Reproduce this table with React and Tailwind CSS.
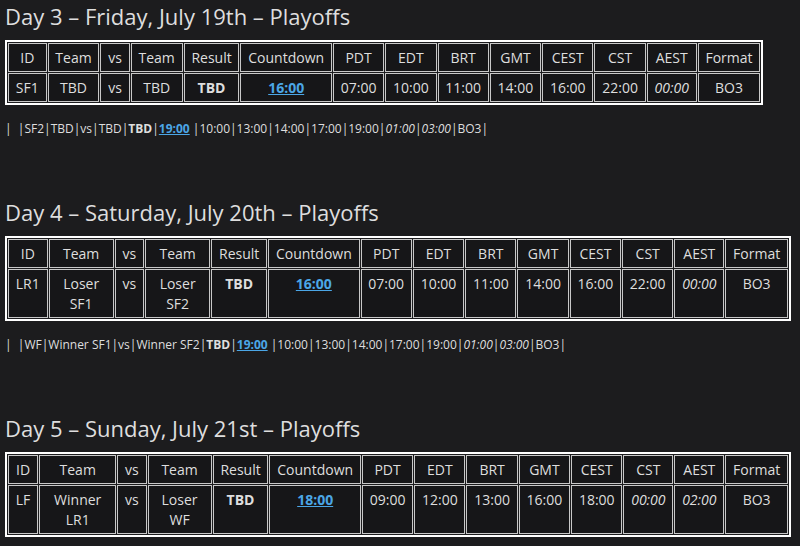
import React from "react";

const zones = ["PDT", "EDT", "BRT", "GMT", "CEST", "CST", "AEST"];

const days = [
  {
    title: "Day 3 – Friday, July 19th – Playoffs",
    match: {
      id: "SF1",
      team1: "TBD",
      team2: "TBD",
      countdown: "16:00",
      times: ["07:00", "10:00", "11:00", "14:00", "16:00", "22:00", "00:00"],
      italic: [6],
    },
    next: {
      id: "SF2",
      team1: "TBD",
      team2: "TBD",
      countdown: "19:00",
      times: ["10:00", "13:00", "14:00", "17:00", "19:00", "01:00", "03:00"],
      italic: [5, 6],
    },
  },
  {
    title: "Day 4 – Saturday, July 20th – Playoffs",
    match: {
      id: "LR1",
      team1: "Loser SF1",
      team2: "Loser SF2",
      countdown: "16:00",
      times: ["07:00", "10:00", "11:00", "14:00", "16:00", "22:00", "00:00"],
      italic: [6],
    },
    next: {
      id: "WF",
      team1: "Winner SF1",
      team2: "Winner SF2",
      countdown: "19:00",
      times: ["10:00", "13:00", "14:00", "17:00", "19:00", "01:00", "03:00"],
      italic: [5, 6],
    },
  },
  {
    title: "Day 5 – Sunday, July 21st – Playoffs",
    match: {
      id: "LF",
      team1: "Winner LR1",
      team2: "Loser WF",
      countdown: "18:00",
      times: ["09:00", "12:00", "13:00", "16:00", "18:00", "00:00", "02:00"],
      italic: [5, 6],
    },
  },
];

const cell = "border border-[#c8c8c8] bg-[#161618] px-[6.8px] py-[3.5px] text-center";

const MatchTable = ({ m }) => (
  <table className="border-2 border-white border-separate border-spacing-[1px] text-[14px] leading-5">
    <thead>
      <tr>
        {["ID", "Team", "vs", "Team", "Result", "Countdown", ...zones, "Format"].map((h, i) => (
          <th key={i} className={`${cell} font-normal align-middle`}>
            {h}
          </th>
        ))}
      </tr>
    </thead>
    <tbody>
      <tr className="align-top">
        <td className={cell}>{m.id}</td>
        <td className={cell}>{m.team1}</td>
        <td className={cell}>vs</td>
        <td className={cell}>{m.team2}</td>
        <td className={`${cell} font-bold`}>TBD</td>
        <td className={cell}>
          <a className="font-bold underline text-[#4ba6e6]">{m.countdown}</a>
        </td>
        {m.times.map((t, i) => (
          <td key={i} className={`${cell} ${m.italic.includes(i) ? "italic" : ""}`}>
            {t}
          </td>
        ))}
        <td className={cell}>BO3</td>
      </tr>
    </tbody>
  </table>
);

// the unfinished markdown row that shows up under each table
const RawRow = ({ n }) => (
  <p className="mt-[14px] h-5 text-[12px] leading-5 whitespace-nowrap">
    |&nbsp; |{n.id}|{n.team1}|vs|{n.team2}|<b>TBD</b>|
    <a className="font-bold underline text-[#4ba6e6]">{n.countdown}</a> |
    {n.times.map((t, i) => (
      <React.Fragment key={i}>
        {n.italic.includes(i) ? <i>{t}</i> : t}|
      </React.Fragment>
    ))}
    BO3|
  </p>
);

export default function App() {
  return (
    <div
      className="min-h-[546px] bg-[#1c1c1e] text-[#dedede] pl-[5px] pr-[9px] pt-px"
      style={{ fontFamily: '"Open Sans", "Noto Sans", sans-serif' }}
    >
      {days.map((d, i) => (
        <section key={i} className={i > 0 ? "mt-[58px]" : ""}>
          <h2 className="h-[30px] text-[22px] leading-[30px] mb-[9px]">{d.title}</h2>
          <MatchTable m={d.match} />
          {d.next && <RawRow n={d.next} />}
        </section>
      ))}
    </div>
  );
}
